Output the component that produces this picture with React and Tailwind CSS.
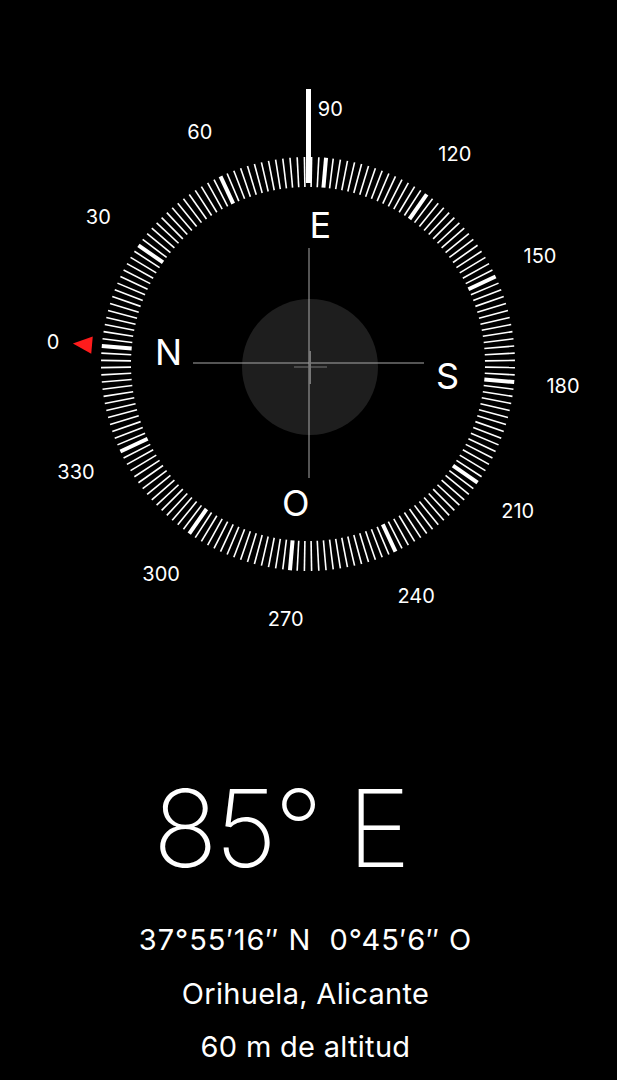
import React from 'react'

const CX = 308
const CY = 364
const HEADING = 85

function pt(deg, r) {
  const a = (deg * Math.PI) / 180
  return [CX + r * Math.sin(a), CY - r * Math.cos(a)]
}

const ticks = Array.from({ length: 180 }, (_, i) => i * 2)
const degrees = Array.from({ length: 12 }, (_, i) => i * 30)
const cardinals = [
  ['N', 0],
  ['E', 90],
  ['S', 180],
  ['O', 270],
]

function Compass() {
  const tip = pt(-HEADING, 236)
  const b1 = pt(-HEADING - 2.3, 217)
  const b2 = pt(-HEADING + 2.3, 217)
  return (
    <svg width="617" height="660" viewBox="0 0 617 660" className="block">
      {ticks.map((d) => {
        const s = d - HEADING
        const [x1, y1] = pt(s, 177)
        const [x2, y2] = pt(s, 207)
        const major = d % 30 === 0
        return (
          <line
            key={d}
            x1={x1}
            y1={y1}
            x2={x2}
            y2={y2}
            stroke="#fff"
            strokeWidth={major ? 4 : 1.6}
          />
        )
      })}
      <rect x="306" y="89" width="5" height="94" fill="#fff" />

      {degrees.map((d) => {
        const [x, y] = pt(d - HEADING, 256)
        return (
          <text
            key={d}
            x={x}
            y={y}
            fill="#fff"
            fontSize="20"
            textAnchor="middle"
            dominantBaseline="central"
            fontFamily="Inter, 'Liberation Sans', sans-serif"
          >
            {d}
          </text>
        )
      })}

      {cardinals.map(([l, d]) => {
        const [x, y] = pt(d - HEADING, 140)
        return (
          <text
            key={l}
            x={x}
            y={y}
            fill="#fff"
            fontSize="36"
            textAnchor="middle"
            dominantBaseline="central"
            fontFamily="Inter, 'Liberation Sans', sans-serif"
          >
            {l}
          </text>
        )
      })}

      <polygon
        points={`${tip[0]},${tip[1]} ${b1[0]},${b1[1]} ${b2[0]},${b2[1]}`}
        fill="#ff1c1c"
      />

      {/* level bubble */}
      <circle cx="310" cy="367" r="68" fill="#1e1e1e" />
      <line x1="193" y1="363" x2="424" y2="363" stroke="#a8a8a8" strokeWidth="1" />
      <line x1="309" y1="248" x2="309" y2="478" stroke="#a8a8a8" strokeWidth="1" />
      <line x1="294" y1="367" x2="327" y2="367" stroke="#777" strokeWidth="1" />
      <line x1="310" y1="351" x2="310" y2="384" stroke="#777" strokeWidth="2" />
    </svg>
  )
}

export default function App() {
  return (
    <div className="h-[1080px] w-full overflow-hidden bg-black text-white font-['Inter','Liberation_Sans',sans-serif]">
      <Compass />
      <div className="mt-[115px] flex flex-col items-center">
        <div className="pr-[56px] text-[107px] font-[160] leading-none tracking-[-0.025em]">85° E</div>
        <div className="mt-[31px] flex flex-col items-center pr-[6px] text-[29px] leading-[53.5px] tracking-[0.01em]">
          <span className="tracking-[0.033em]">37°55′16″ N&nbsp;&nbsp;0°45′6″ O</span>
          <span>Orihuela, Alicante</span>
          <span>60 m de altitud</span>
        </div>
      </div>
    </div>
  )
}
